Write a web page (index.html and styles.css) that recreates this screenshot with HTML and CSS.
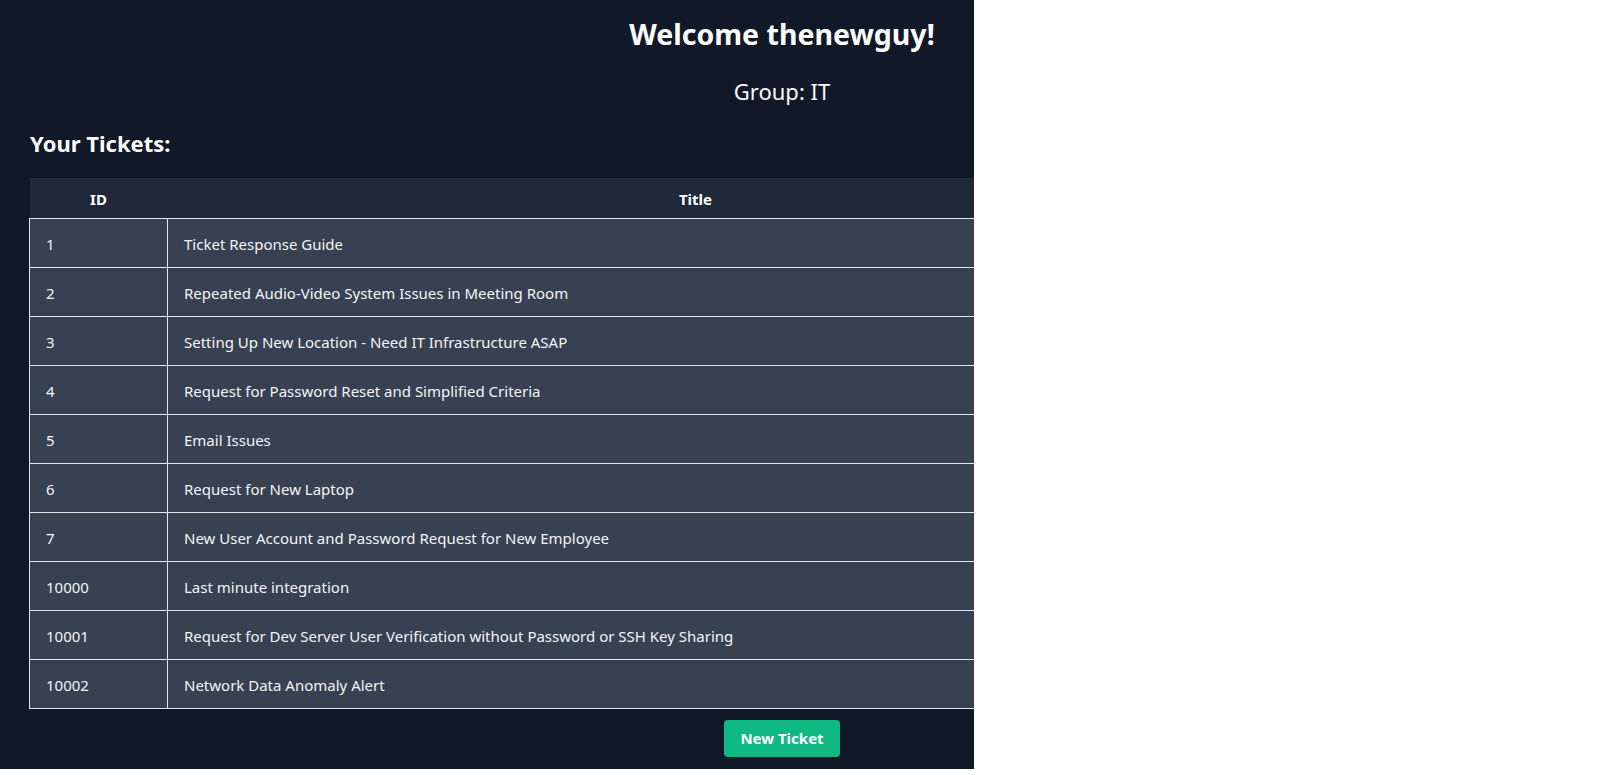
FILE: index.html
```html
<!DOCTYPE html>
<html lang="en">
<head>
<meta charset="utf-8">
<title>Tickets</title>
<link rel="stylesheet" href="styles.css">
</head>
<body>
<div class="page">
  <div class="inner">
    <h1 class="welcome">Welcome thenewguy!</h1>
    <p class="group">Group: IT</p>
    <h2 class="section-title">Your Tickets:</h2>
    <table class="tickets">
      <colgroup>
        <col class="col-id">
        <col class="col-title">
      </colgroup>
      <thead>
        <tr><th>ID</th><th>Title</th></tr>
      </thead>
      <tbody>
        <tr><td>1</td><td>Ticket Response Guide</td></tr>
        <tr><td>2</td><td>Repeated Audio-Video System Issues in Meeting Room</td></tr>
        <tr><td>3</td><td>Setting Up New Location - Need IT Infrastructure ASAP</td></tr>
        <tr><td>4</td><td>Request for Password Reset and Simplified Criteria</td></tr>
        <tr><td>5</td><td>Email Issues</td></tr>
        <tr><td>6</td><td>Request for New Laptop</td></tr>
        <tr><td>7</td><td>New User Account and Password Request for New Employee</td></tr>
        <tr><td>10000</td><td>Last minute integration</td></tr>
        <tr><td>10001</td><td>Request for Dev Server User Verification without Password or SSH Key Sharing</td></tr>
        <tr><td>10002</td><td>Network Data Anomaly Alert</td></tr>
      </tbody>
    </table>
    <div class="actions">
      <button class="btn-new">New Ticket</button>
    </div>
  </div>
</div>
</body>
</html>
```
FILE: styles.css
```css
html, body {
  margin: 0;
  padding: 0;
  background: #ffffff;
}
body {
  font-family: "Noto Sans", "Open Sans", sans-serif;
  color: #f9fafb;
}
.page {
  width: 974px;
  height: 769px;
  background: #111827;
  overflow: hidden;
}
.inner {
  width: 1564px;
  padding-top: 14px;
}
.welcome {
  margin: 0;
  text-align: center;
  font-size: 28.5px;
  line-height: 40px;
  font-weight: 700;
  color: #ffffff;
}
.group {
  margin: 22px 0 0;
  text-align: center;
  font-size: 22px;
  line-height: 30px;
  font-weight: 400;
}
.section-title {
  margin: 22px 0 0 30px;
  font-size: 22px;
  line-height: 30px;
  font-weight: 700;
  color: #ffffff;
}
.tickets {
  margin: 20px 0 0 29px;
  border-collapse: collapse;
  width: 1194px;
  table-layout: fixed;
  font-size: 15px;
}
.col-id { width: 138px; }
.col-title { width: 1056px; }
.tickets th {
  background: #1f2937;
  color: #ffffff;
  font-weight: 700;
  text-align: center;
  padding: 11px 16px 9px;
  line-height: 20px;
}
.tickets td {
  background: #374151;
  color: #f3f4f6;
  border: 1px solid #e5e7eb;
  padding: 15px 16px 13px;
  line-height: 20px;
  text-align: left;
}
.actions {
  display: flex;
  justify-content: center;
  padding-top: 11px;
}
.btn-new {
  font-family: inherit;
  font-size: 15px;
  font-weight: 700;
  line-height: 21px;
  color: #ffffff;
  background: #10b981;
  border: none;
  border-radius: 4px;
  padding: 8px 16px;
  cursor: pointer;
}
```
